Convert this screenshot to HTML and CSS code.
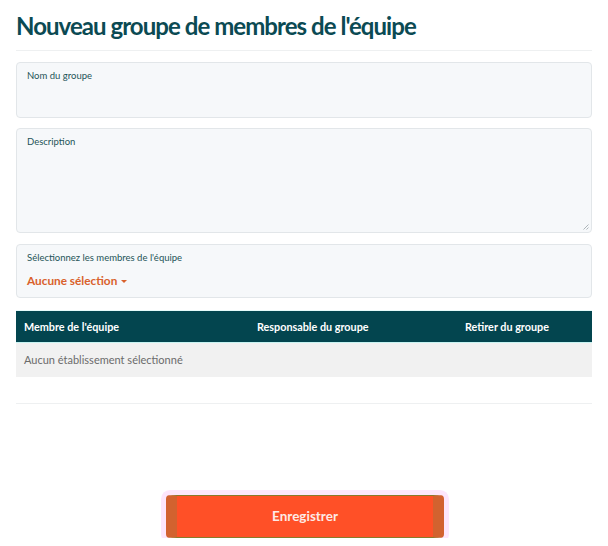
FILE: index.html
```html
<!DOCTYPE html>
<html lang="fr">
<head>
<meta charset="utf-8">
<link rel="stylesheet" href="styles.css">
</head>
<body>
<div class="page">
  <h1 class="title">Nouveau groupe de membres de l'équipe</h1>
  <hr class="rule">
  <div class="field field-name">
    <label class="label">Nom du groupe</label>
  </div>
  <div class="field field-desc">
    <label class="label">Description</label>
    <svg class="grip" width="7" height="7" viewBox="0 0 7 7"><path d="M6.5 1.5L1.5 6.5M6.5 4.5L4.5 6.5" stroke="#9aa3a8" stroke-width="0.8" fill="none"/></svg>
  </div>
  <div class="field field-select">
    <label class="label">Sélectionnez les membres de l'équipe</label>
    <div class="dropdown">Aucune sélection <span class="caret"></span></div>
  </div>
  <div class="table">
    <div class="thead">
      <div class="th c1">Membre de l'équipe</div>
      <div class="th c2">Responsable du groupe</div>
      <div class="th c3">Retirer du groupe</div>
    </div>
    <div class="tbody">Aucun établissement sélectionné</div>
  </div>
  <hr class="rule rule-bottom">
  <div class="actions">
    <button class="save">Enregistrer</button>
  </div>
</div>
</body>
</html>
```

FILE: styles.css
```css
html, body {
  margin: 0;
  padding: 0;
  background: #ffffff;
}
body {
  font-family: Lato, "Open Sans", sans-serif;
}
.page {
  padding: 0 16px;
  display: flex;
  flex-direction: column;
}
.title {
  margin: 11px 0 0;
  font-size: 24px;
  letter-spacing: -0.95px;
  font-weight: 700;
  color: #0b4a53;
  line-height: 30px;
  height: 30px;
}
.rule {
  border: 0;
  border-top: 1px solid #eef0f1;
  margin: 9px 0 11px;
}
.field {
  position: relative;
  box-sizing: border-box;
  background: #f6f8fa;
  border: 1px solid #e2e6e9;
  border-radius: 4px;
  padding: 7px 10px;
}
.field-name { height: 56px; }
.field-desc { height: 105px; margin-top: 10px; }
.field-select { height: 54px; margin-top: 11px; }
.label {
  display: block;
  font-size: 9.5px;
  line-height: 12px;
  color: #1e5458;
}
.grip {
  position: absolute;
  right: 2px;
  bottom: 2px;
}
.dropdown {
  margin-top: 10px;
  font-size: 11.8px;
  font-weight: 700;
  color: #d9612c;
  line-height: 14px;
}
.caret {
  display: inline-block;
  width: 0;
  height: 0;
  border-left: 3px solid transparent;
  border-right: 3px solid transparent;
  border-top: 3px solid #d9612c;
  vertical-align: middle;
  margin-left: 1px;
}
.table {
  margin-top: 12px;
}
.thead {
  display: grid;
  grid-template-columns: 233px 208px 1fr;
  background: #03454f;
  border-top: 1px solid #e6fbfb;
  border-bottom: 1px solid #c8f4f2;
  height: 31px;
  align-items: center;
}
.th {
  color: #ffffff;
  font-size: 10.8px;
  font-weight: 700;
  padding-left: 8px;
}
.tbody {
  background: #f1f1f1;
  height: 34px;
  line-height: 34px;
  padding-left: 8px;
  font-size: 11px;
  color: #6b6b6b;
}
.rule-bottom {
  margin: 26px 0 0;
}
.actions {
  display: flex;
  justify-content: center;
  margin-top: 91px;
}
.save {
  width: 278px;
  height: 43px;
  box-sizing: border-box;
  background: #ff5027;
  border: 1px solid #8a7a2a;
  border-left: 11px solid #d2622f;
  border-right: 11px solid #d2622f;
  border-radius: 4px;
  color: #fdeae6;
  font-family: Lato, sans-serif;
  font-size: 13.5px;
  font-weight: 700;
  padding: 0 0 2px;
  box-shadow: 0 0 0 5px #fde6fb;
  margin-left: 2px;
}
```
